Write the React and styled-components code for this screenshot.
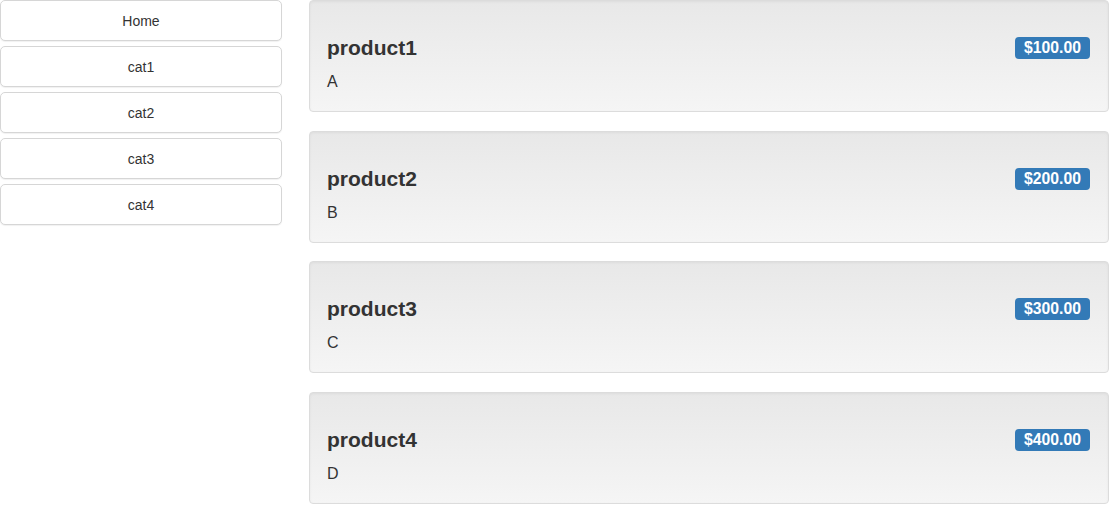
import styled, { createGlobalStyle } from 'styled-components';

const GlobalStyle = createGlobalStyle`
  body {
    margin: 0;
    background: #fff;
    font-family: "Liberation Sans", Arial, sans-serif;
    color: #333;
  }
`;

const Layout = styled.div`
  display: grid;
  grid-template-columns: 282px 800px;
  column-gap: 27px;
  align-items: start;
`;

const Nav = styled.nav`
  display: flex;
  flex-direction: column;
  gap: 5px;
`;

const NavButton = styled.a`
  display: flex;
  align-items: center;
  justify-content: center;
  height: 41px;
  box-sizing: border-box;
  border: 1px solid #d6d6d6;
  border-radius: 5px;
  background: #fff;
  box-shadow: 0 1px 1px rgba(0, 0, 0, 0.06);
  font-size: 14px;
  color: #333;
  text-decoration: none;
  cursor: pointer;
`;

const Products = styled.div`
  display: flex;
  flex-direction: column;
  gap: 18.7px;
`;

const Well = styled.div`
  box-sizing: border-box;
  height: 112px;
  padding: 0 18px 0 17px;
  border: 1px solid #dcdcdc;
  border-radius: 4px;
  background: linear-gradient(to bottom, #e8e8e8 0%, #f5f5f5 100%);
  box-shadow: inset 0 1px 3px rgba(0, 0, 0, 0.05), 0 1px 0 rgba(255, 255, 255, 0.1);
`;

const TitleRow = styled.div`
  display: flex;
  align-items: center;
  justify-content: space-between;
  margin-top: 35px;
  height: 24px;
`;

const Title = styled.h3`
  margin: 0;
  font-size: 21px;
  font-weight: bold;
  line-height: 24px;
  color: #333;
`;

const Price = styled.span`
  display: inline-block;
  padding: 3px 9px 3px;
  border-radius: 4px;
  background: #337ab7;
  color: #fff;
  font-size: 15.75px;
  font-weight: bold;
  line-height: 16px;
`;

const Description = styled.p`
  margin: 11px 0 0;
  font-size: 16px;
  line-height: 22px;
`;

const categories = ['Home', 'cat1', 'cat2', 'cat3', 'cat4'];

const products = [
  { name: 'product1', price: '$100.00', description: 'A' },
  { name: 'product2', price: '$200.00', description: 'B' },
  { name: 'product3', price: '$300.00', description: 'C' },
  { name: 'product4', price: '$400.00', description: 'D' },
];

const App = () => (
  <>
    <GlobalStyle />
    <Layout>
      <Nav>
        {categories.map((cat) => (
          <NavButton key={cat}>{cat}</NavButton>
        ))}
      </Nav>
      <Products>
        {products.map(({ name, price, description }) => (
          <Well key={name}>
            <TitleRow>
              <Title>{name}</Title>
              <Price>{price}</Price>
            </TitleRow>
            <Description>{description}</Description>
          </Well>
        ))}
      </Products>
    </Layout>
  </>
);

export default App;
